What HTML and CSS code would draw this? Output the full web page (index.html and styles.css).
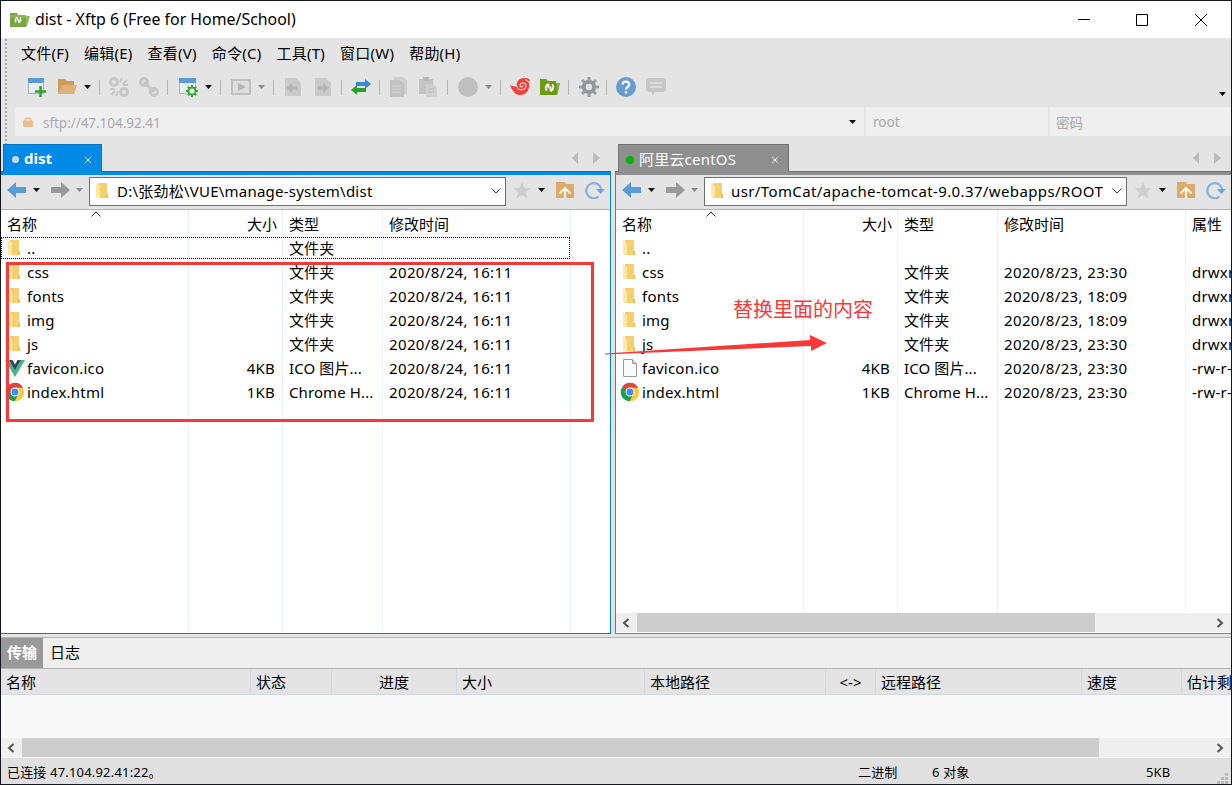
FILE: index.html
```html
<!DOCTYPE html>
<html lang="zh-CN">
<head>
    <meta charset="UTF-8">
    <meta name="viewport" content="width=device-width, initial-scale=1.0">
    <title>dist - Xftp 6</title>
    <link rel="stylesheet" href="styles.css">
</head>
<body>
    <svg class="defs">
        <symbol id="folder" viewBox="0 0 14 18"><path d="M3 1h9v11h1v4H4z" fill="#f6d070"/><path d="M11 12h2v4h-2z" fill="#efc052"/><path d="M1 1l4 3v13l-4-2z" fill="#ffe9a2"/></symbol>
        <symbol id="caret" viewBox="0 0 7 4"><path d="M0 0h7L3.5 4z"/></symbol>
        <symbol id="back" viewBox="0 0 20 16"><path d="M0 8l9-8v5h10v6H9v5z"/></symbol>
        <symbol id="star" viewBox="0 0 18 17"><path d="M9 0l2.3 6 6.2.3-4.7 3.9L14.500 16.500 9 13l-5.500 3.500 1.700-6.300L.500 6.300 6.700 6z" fill="#cdcdcd"/></symbol>
        <symbol id="up" viewBox="0 0 18 16"><path d="M0 0h9l1 2h8v14H0z" fill="#dcaa6a"/><path d="M3.500 11.500L9 6l5.500 5.500M9 7v9" fill="none" stroke="#fff3e2" stroke-width="2.200"/></symbol>
        <symbol id="reload" viewBox="0 0 20 18"><path d="M13.500 15.700A7.600 7.600 0 1 1 16.300 8" fill="none" stroke="#7fb4e2" stroke-width="2.200"/><path d="M11 8h9l-4.500 5z" fill="#6ba6db"/></symbol>
        <symbol id="chrome" viewBox="0 0 20 20"><circle cx="10" cy="10" r="9.200" fill="#fdc83a"/><path d="M10 10L2 5.400A9.200 9.200 0 0 1 18.200 5.800H10z" fill="#d94a40"/><path d="M2 5.400A9.200 9.200 0 0 0 9.500 19.200L13.500 12 10 10z" fill="#199c57"/><circle cx="10" cy="10" r="4.500" fill="#fff"/><circle cx="10" cy="10" r="3.500" fill="#4a88f0"/></symbol>
        <symbol id="page" viewBox="0 0 16 18"><path d="M1.500.500h9l4 4v13h-13z" fill="#fafafa" stroke="#999"/><path d="M10.500.500v4h4" fill="#ddd" stroke="#999"/></symbol>
        <symbol id="vue" viewBox="0 0 20 17"><path d="M0 0h4l6 10.500L16 0h4L10 17z" fill="#41b883"/><path d="M4 0h3.500L10 4.500 12.500 0H16l-6 10.500z" fill="#35495e"/></symbol>
        <symbol id="chev" viewBox="0 0 10 6"><path d="M.500.500L5 5 9.500.500" fill="none" stroke="#333"/></symbol>
        <symbol id="cross" viewBox="0 0 8 8"><path d="M1 1l6 6M7 1L1 7" stroke="#fff" stroke-width="1"/></symbol>
        <symbol id="swirl" viewBox="0 0 10 10"><path d="M4 1.500Q0 4 2.500 8M4 1.500V6M6 8.500Q10 6 7.500 2M6 8.500V4" fill="none" stroke="#fff" stroke-width="1.600"/></symbol>
        <symbol id="scroll" viewBox="0 0 8 10"><path d="M6.500 1L2 5l4.500 4" fill="none" stroke="#555" stroke-width="2"/></symbol>
    </svg>

    <div class="window">
        <div class="titlebar">
            <svg class="logo" width="20" height="14" viewBox="0 0 20 14"><path d="M14 3h6l-3 10h-3z" fill="#94ba5a"/><path d="M0 0h7l1 2h8v12H0z" fill="#79a541"/><path d="M0 2h16v3H0z" fill="#8fb55c"/><use href="#swirl" x="4" y="3" width="8" height="8"/></svg>
            <span class="title">dist - Xftp 6 (Free for Home/School)</span>
            <svg class="winbtns" width="132" height="14" viewBox="0 0 132 14"><path d="M1 6.500h12M59.500 1.500h11v11h-11zM118 1l12 12M130 1l-12 12" fill="none" stroke="#000"/></svg>
        </div>

        <div class="bars">
            <div class="menubar">
                <span>文件(F)</span><span>编辑(E)</span><span>查看(V)</span><span>命令(C)</span><span>工具(T)</span><span>窗口(W)</span><span>帮助(H)</span>
            </div>
            <div class="toolbar">
                <svg width="20" height="20"><path d="M2 1h16v16H2z" fill="#a5b4c2"/><path d="M3 6h14v10H3z" fill="#e9eef2"/><path d="M2 1h16v5H2z" fill="#5b9bd5"/><path d="M14.500 9v11M9 14.500h11" stroke="#2ba52b" stroke-width="2.400"/></svg>
                <svg width="20" height="20"><path d="M1 2h7l2 2h7v13H1z" fill="#cf9c5e"/><path d="M5 8h15l-3 9H1z" fill="#dfb077"/></svg>
                <svg class="caret" width="7" height="4"><use href="#caret"/></svg>
                <i class="sep"></i>
                <svg width="20" height="20" fill="none" stroke="#c6c6c6" stroke-width="3"><circle cx="5" cy="5" r="3.500"/><circle cx="15" cy="15" r="3.500"/><path d="M13 1l-2 4M18 3l-4 4M19 8h-5M1 12h5M2 18l4-4M7 19l2-5" stroke-width="2"/></svg>
                <svg width="20" height="20" fill="none" stroke="#c6c6c6" stroke-width="3"><circle cx="5" cy="5" r="3.500"/><circle cx="15" cy="15" r="3.500"/><path d="M5 5l10 10"/></svg>
                <i class="sep"></i>
                <svg width="20" height="20"><path d="M1 1h17v16H1z" fill="#a5b4c2"/><path d="M2 6h15v10H2z" fill="#e9eef2"/><path d="M1 1h17v5H1z" fill="#5b9bd5"/><circle cx="14" cy="14" r="6" fill="#e5f2e5"/><circle cx="14" cy="14" r="3.600" fill="none" stroke="#35a535" stroke-width="2"/><path d="M14 8v2M14 18v2M8 14h2M18 14h2M9.800 9.800l1.500 1.500M16.700 16.700l1.500 1.500M18.200 9.800l-1.500 1.500M11.300 16.700l-1.500 1.500" stroke="#35a535" stroke-width="2"/></svg>
                <svg class="caret" width="7" height="4"><use href="#caret"/></svg>
                <i class="sep"></i>
                <svg width="20" height="20"><rect x="1" y="3" width="18" height="14" fill="#dedede" stroke="#c0c0c0" stroke-width="2"/><path d="M7 6l8 4-8 4z" fill="#b4b4b4"/></svg>
                <svg class="caret dim" width="7" height="4"><use href="#caret"/></svg>
                <i class="sep"></i>
                <svg width="20" height="20"><path d="M2 1h11l5 5v13H2z" fill="#cacaca"/><path d="M3 11l6-5v3h5v4H9v3z" fill="#b5b5b5"/></svg>
                <svg width="20" height="20"><path d="M2 1h11l5 5v13H2z" fill="#cacaca"/><path d="M16 11l-6-5v3H5v4h5v3z" fill="#b5b5b5"/></svg>
                <i class="sep"></i>
                <svg width="20" height="20"><path d="M20 7l-6-5v3H5v4h9v3z" fill="#3b87d3"/><path d="M0 13l6-5v3h9v4H6v3z" fill="#2aa12a"/></svg>
                <i class="sep"></i>
                <svg width="20" height="20"><path d="M6 0h9l4 4v13H6z" fill="#cdcdcd"/><path d="M2 3h10l4 4v13H2z" fill="#c2c2c2"/><path d="M4 9h9M4 12h9M4 15h9" stroke="#d6d6d6"/></svg>
                <svg width="20" height="20"><path d="M1 2h14v15H1z" fill="#c4c4c4"/><path d="M5 0h6v4H5z" fill="#b9b9b9"/><path d="M8 7h7l4 3v10H8z" fill="#d0d0d0"/><path d="M10 12h6M10 15h6" stroke="#bbb"/></svg>
                <i class="sep"></i>
                <svg width="20" height="20"><circle cx="10" cy="10" r="10" fill="#bfbfbf"/></svg>
                <svg class="caret mid" width="7" height="4"><use href="#caret"/></svg>
                <i class="sep"></i>
                <svg width="20" height="20"><path d="M0 8c2 1 5 2 7 1C6 4 10 1 14 1c2 0 4 0 6 2l-1 2c1 7-2 13-9 13-5 0-8-5-10-10z" fill="#f0413a"/><path d="M7 9c0 5 8 5 9 0 0-4-6-4-6-.500 0 2 3 2 3 0M15 2.500c2 .5 3 1.500 4 3" fill="none" stroke="#f5dcdb" stroke-width="1.100"/></svg>
                <svg width="20" height="20"><path d="M0 2h6l2 2h8v2h4l-3 12H0z" fill="#6b9c12"/><path d="M17 6h3l-3 12z" fill="#86ad44"/><use href="#swirl" x="4" y="5" width="11" height="11"/></svg>
                <i class="sep"></i>
                <svg width="20" height="20"><circle cx="10" cy="10" r="5.200" fill="none" stroke="#949799" stroke-width="4"/><path d="M10 0v4M10 16v4M0 10h4M16 10h4M3 3l3 3M14 14l3 3M17 3l-3 3M6 14l-3 3" stroke="#999c9f" stroke-width="3"/></svg>
                <i class="sep"></i>
                <svg width="20" height="20"><circle cx="10" cy="10" r="10" fill="#6a9bcf"/><path d="M6.500 7.500C7 3 14 4 13.200 8c-.500 2-3.200 2-3.200 4.500M10 14.200v2.200" fill="none" stroke="#fff" stroke-width="2.200"/></svg>
                <svg width="20" height="20"><path d="M2 1h16l2 2v10l-2 2H9l-3 4v-4H2l-2-2V3z" fill="#c6c6c6"/><path d="M4 6h12M4 10h12" stroke="#dcdcdc" stroke-width="2"/></svg>
                <svg class="caret more" width="7" height="4"><use href="#caret"/></svg>
            </div>
            <div class="address">
                <div class="url"><svg width="10" height="10"><path d="M2.500 5V3a2.500 2 0 0 1 5 0v2" fill="none" stroke="#e6bd88" stroke-width="1.600"/><rect y="3.500" width="10" height="6.500" rx="1" fill="#e8c08c"/></svg><span>sftp://47.104.92.41</span><svg class="caret" width="7" height="4"><use href="#caret"/></svg></div>
                <div class="user">root</div>
                <div class="pwd">密码</div>
            </div>
        </div>

        <div class="panes">
            <div class="pane local">
                <div class="tabs">
                    <div class="tab"><i></i><b>dist</b><svg width="8" height="8"><use href="#cross"/></svg></div>
                    <svg class="scrolls" width="28" height="12"><path d="M6 0v12L0 6zM21 0v12l7-6z" fill="#bcbcbc"/></svg>
                </div>
                <div class="view">
                    <div class="nav">
                        <svg width="20" height="16" fill="#5b9bd5"><use href="#back"/></svg>
                        <svg class="caret" width="7" height="4"><use href="#caret"/></svg>
                        <svg class="fwd" width="20" height="16" fill="#999"><use href="#back"/></svg>
                        <svg class="caret mid" width="7" height="4"><use href="#caret"/></svg>
                        <div class="path"><svg width="14" height="18"><use href="#folder"/></svg><span>D:\张劲松\VUE\manage-system\dist</span><svg class="drop" width="10" height="6"><use href="#chev"/></svg></div>
                        <svg width="18" height="17"><use href="#star"/></svg>
                        <svg class="caret fav" width="7" height="4"><use href="#caret"/></svg>
                        <svg width="18" height="16"><use href="#up"/></svg>
                        <svg class="reload" width="20" height="18"><use href="#reload"/></svg>
                    </div>
                    <div class="list">
                        <svg class="sort" width="10" height="6"><use href="#chev"/></svg>
                        <div class="row head"><span>名称</span><span>大小</span><span>类型</span><span>修改时间</span></div>
                        <div class="row focus"><span><svg width="14" height="18"><use href="#folder"/></svg>..</span><span></span><span>文件夹</span></div>
                        <div class="row"><span><svg width="14" height="18"><use href="#folder"/></svg>css</span><span></span><span>文件夹</span><span>2020/8/24, 16:11</span></div>
                        <div class="row"><span><svg width="14" height="18"><use href="#folder"/></svg>fonts</span><span></span><span>文件夹</span><span>2020/8/24, 16:11</span></div>
                        <div class="row"><span><svg width="14" height="18"><use href="#folder"/></svg>img</span><span></span><span>文件夹</span><span>2020/8/24, 16:11</span></div>
                        <div class="row"><span><svg width="14" height="18"><use href="#folder"/></svg>js</span><span></span><span>文件夹</span><span>2020/8/24, 16:11</span></div>
                        <div class="row"><span><svg class="big" width="20" height="17"><use href="#vue"/></svg>favicon.ico</span><span>4KB</span><span>ICO 图片...</span><span>2020/8/24, 16:11</span></div>
                        <div class="row"><span><svg class="big" width="20" height="20"><use href="#chrome"/></svg>index.html</span><span>1KB</span><span>Chrome H...</span><span>2020/8/24, 16:11</span></div>
                    </div>
                </div>
            </div>

            <div class="pane remote">
                <div class="tabs">
                    <div class="tab"><i></i><span>阿里云centOS</span><svg width="8" height="8"><use href="#cross"/></svg></div>
                    <svg class="scrolls" width="28" height="12"><path d="M6 0v12L0 6zM21 0v12l7-6z" fill="#bcbcbc"/></svg>
                </div>
                <div class="view">
                    <div class="nav">
                        <svg width="20" height="16" fill="#5b9bd5"><use href="#back"/></svg>
                        <svg class="caret" width="7" height="4"><use href="#caret"/></svg>
                        <svg class="fwd" width="20" height="16" fill="#999"><use href="#back"/></svg>
                        <svg class="caret mid" width="7" height="4"><use href="#caret"/></svg>
                        <div class="path"><svg width="14" height="18"><use href="#folder"/></svg><span>usr/TomCat/apache-tomcat-9.0.37/webapps/ROOT</span><svg class="drop" width="10" height="6"><use href="#chev"/></svg></div>
                        <svg width="18" height="17"><use href="#star"/></svg>
                        <svg class="caret fav" width="7" height="4"><use href="#caret"/></svg>
                        <svg width="18" height="16"><use href="#up"/></svg>
                        <svg class="reload" width="20" height="18"><use href="#reload"/></svg>
                    </div>
                    <div class="list">
                        <svg class="sort" width="10" height="6"><use href="#chev"/></svg>
                        <div class="row head"><span>名称</span><span>大小</span><span>类型</span><span>修改时间</span><span>属性</span></div>
                        <div class="row"><span><svg width="14" height="18"><use href="#folder"/></svg>..</span></div>
                        <div class="row"><span><svg width="14" height="18"><use href="#folder"/></svg>css</span><span></span><span>文件夹</span><span>2020/8/23, 23:30</span><span>drwxr</span></div>
                        <div class="row"><span><svg width="14" height="18"><use href="#folder"/></svg>fonts</span><span></span><span>文件夹</span><span>2020/8/23, 18:09</span><span>drwxr</span></div>
                        <div class="row"><span><svg width="14" height="18"><use href="#folder"/></svg>img</span><span></span><span>文件夹</span><span>2020/8/23, 18:09</span><span>drwxr</span></div>
                        <div class="row"><span><svg width="14" height="18"><use href="#folder"/></svg>js</span><span></span><span>文件夹</span><span>2020/8/23, 23:30</span><span>drwxr</span></div>
                        <div class="row"><span><svg width="16" height="18"><use href="#page"/></svg>favicon.ico</span><span>4KB</span><span>ICO 图片...</span><span>2020/8/23, 23:30</span><span>-rw-r-</span></div>
                        <div class="row"><span><svg class="big" width="20" height="20"><use href="#chrome"/></svg>index.html</span><span>1KB</span><span>Chrome H...</span><span>2020/8/23, 23:30</span><span>-rw-r-</span></div>
                    </div>
                    <div class="hscroll"><svg width="8" height="10"><use href="#scroll"/></svg><i></i><svg class="right" width="8" height="10"><use href="#scroll"/></svg></div>
                </div>
            </div>
        </div>

        <div class="transfer">
            <div class="ttabs"><b>传输</b><span>日志</span></div>
            <div class="thead"><span>名称</span><span>状态</span><span class="mid">进度</span><span>大小</span><span>本地路径</span><span class="mid">&lt;-&gt;</span><span>远程路径</span><span>速度</span><span>估计剩</span></div>
            <div class="tbody"></div>
            <div class="hscroll"><svg width="8" height="10"><use href="#scroll"/></svg><i></i><svg class="right" width="8" height="10"><use href="#scroll"/></svg></div>
        </div>
        <div class="status">
            <span>已连接 47.104.92.41:22。</span><span>二进制</span><span>6 对象</span><span>5KB</span>
            <svg width="11" height="11" fill="#b9b9b9"><path d="M8 0h3v3H8zM4 4h3v3H4zM8 4h3v3H8zM0 8h3v3H0zM4 8h3v3H4zM8 8h3v3H8z"/></svg>
        </div>
    </div>

    <div class="mark-box"></div>
    <div class="mark-text">替换里面的内容</div>
    <svg class="mark-arrow" width="222" height="20"><path d="M0 18.500L205 5V0l17 8-16 8v-5L0 19.500z" fill="#fb3838"/></svg>
</body>
</html>
```
FILE: styles.css
```css
*{padding: 0;margin: 0;box-sizing: border-box;}
body{width: 1232px;height: 785px;overflow: hidden;position: relative;background: #15171e;font: 15px/24px "Noto Sans","Noto Sans CJK SC",sans-serif;color: #000;}
svg{flex: none;display: block;}
.defs{position: absolute;width: 0;height: 0;}
.window{display: flex;flex-direction: column;width: 1232px;height: 785px;padding: 1px;background: #15171e;}
.window > div{flex-shrink: 0;}
.caret{fill: #111;}
.caret.dim,.caret.mid{fill: #8b8b8b;}

/* title bar */
.titlebar{display: flex;align-items: center;height: 37px;padding: 0 22px 0 9px;background: #fff;}
.title{margin: 0 0 2px 5px;font-size: 15.900px;white-space: nowrap;}
.winbtns{margin-left: auto;}

/* menu + toolbar + address */
.bars{height: 106px;background: #e4e4e4 radial-gradient(circle,#a5a5a5 1px,transparent 1.2px) 3px 0/4px 4px repeat-y;}
.menubar{display: flex;height: 32px;padding-left: 20px;line-height: 31px;}
.menubar span{margin-right: 15px;white-space: nowrap;letter-spacing: .24px;}
.toolbar{display: grid;align-items: center;height: 34px;padding-left: 25px;
grid-template-columns: 31px 27px 15px 10px 30px 28px 11px 27px 15px 11px 27px 15px 10px 30px 28px 10px 28px 9px 30px 29px 11px 27px 15px 10px 30px 28px 11px 27px 10px 30px 30px 1fr;}
.sep{width: 1px;height: 15px;background: #b5b5b5;}
.toolbar .more{justify-self: end;align-self: end;margin: 0 5px 8px 0;}
.address{display: flex;gap: 2px;height: 29px;margin: 3px 0 0 14px;color: #aaa;font-size: 13.600px;line-height: 30px;}
.address div{background: #efefef;}
.url{display: flex;align-items: center;width: 849px;padding: 0 8px;}
.url span{margin: 2px 0 0 10px;letter-spacing: -.08px;}
.url .caret{margin-left: auto;}
.user{width: 182px;padding-left: 7px;}
.pwd{flex: 1;padding-left: 6px;line-height: 31px;}

/* panes */
.panes{display: flex;height: 493px;padding-bottom: 3px;background: #e4e4e4;}
.pane{display: flex;flex-direction: column;}
.local{width: 610px;margin-right: 4px;}
.remote{flex: 1;min-width: 0;}
.tabs{display: flex;align-items: flex-start;justify-content: space-between;height: 27px;padding-left: 2px;}
.remote .tabs{padding-left: 3px;}
.tab{display: flex;position: relative;z-index: 1;align-items: center;height: 28px;padding: 0 9px 0 8px;color: #fff;border: 1px solid #0176c3;border-bottom: 0;background: #018be6;}
.tab i{width: 7px;height: 7px;margin: 2px 5px 0 0;border-radius: 50%;background: #d5d5d5;}
.tab svg{margin: 3px 0 0 auto;}
.tab b{margin-bottom: 2px;}
.local .tab{width: 99px;}
.remote .tab{width: 171px;border-color: #737373;background: #8f8f8f;}
.remote .tab span{letter-spacing: .2px;}
.remote .tab i{width: 8px;height: 8px;background: #04b304;margin: 2px 5px 0 -1px;}
.scrolls{margin: 8px 11px 0 0;}
.remote .scrolls{margin-right: 10px;}
.view{display: flex;flex: 1;flex-direction: column;min-width: 0;border-top: 1px solid #0176c3;}
.local .view{border-right: 1px solid #0280cf;border-bottom: 1px solid #0280cf;}
.remote .view{border-top-color: #737373;border-left: 1px solid #777;border-bottom: 1px solid #888;}
.nav{display: flex;flex: none;align-items: center;height: 38px;padding: 0 5px 4px 6px;background: #e4e4e4;border-top: 3px solid #018be6;border-bottom: 1px solid #b3b3b3;}
.remote .nav{border-top-color: #8f8f8f;}
.nav > .caret{margin: 0 10px 0 6px;}
.nav .fwd{transform: scaleX(-1);}
.nav .fwd + .caret{margin: 0 6px 0 6px;}
.nav .caret.fav{margin: 0 11px 0 7px;}
.path{display: flex;flex: 1;align-items: center;height: 29px;margin: 2px 7px 0 0;padding: 0 4px 0 5px;background: #fff;border: 1px solid #707070;white-space: nowrap;min-width: 0;}
.path span{margin: 0 0 1px 8px;letter-spacing: .23px;}
.remote .path span{margin-left: 7px;letter-spacing: .38px;}
.path .drop{margin-left: auto;}
.nav .reload{margin-left: 11px;}
.list{position: relative;flex: 1;overflow: hidden;background: #fff;
background-image: linear-gradient(#e9f2fc,#e9f2fc),linear-gradient(#e9f2fc,#e9f2fc),linear-gradient(#e9f2fc,#e9f2fc),linear-gradient(#e9f2fc,#e9f2fc);
background-position: 187px 0,281px 0,381px 0,569px 0;background-size: 1px 100%;background-repeat: no-repeat;}
.sort{position: absolute;left: 90px;top: 1px;transform: scaleY(-1);}
.row{display: grid;grid-template-columns: 188px 94px 100px 188px 1fr;height: 24px;line-height: 24px;white-space: nowrap;letter-spacing: .22px;}
.row.head{height: 26px;padding-bottom: 0;line-height: 26px;letter-spacing: 0;}
.row.head span{padding-top: 1px;}
.row span{display: flex;align-items: center;padding-left: 6px;overflow: hidden;}
.row span:nth-child(2){justify-content: flex-end;padding: 0 8px 0 0;}
.row.head span:nth-child(2){padding: 1px 6px 0 0;}
.row span:nth-child(3){letter-spacing: .1px;}
.row span:nth-child(4){letter-spacing: .37px;}
.row.head span:nth-child(4){letter-spacing: 0;}
.row svg{margin-right: 6px;}
.row svg[width="16"]{margin-right: 4px;}
.row .big{margin: 0 2px 0 -2px;}
.focus{width: 569px;height: 22px;margin: 1px 0;line-height: 22px;outline: 1px dotted #000;outline-offset: -1px;}
.hscroll{display: flex;flex: none;align-items: center;height: 20px;background: #efefef;padding: 0 7px 0 6px;border-bottom: 1px solid #f8f8f8;}
.hscroll i{height: 19px;margin-left: 7px;background: #cdcdcd;}
.remote .hscroll i{width: 458px;}
.transfer .hscroll i{width: 1077px;}
.hscroll .right{margin-left: auto;transform: scaleX(-1);}

/* transfer list */
.transfer{border-top: 1px solid #b5b5b5;}
.ttabs{display: flex;height: 31px;line-height: 29px;background: #efefef;border-bottom: 1px solid #b5b5b5;}
.ttabs b{width: 42px;padding-left: 6px;color: #fff;background: #999;}
.ttabs span{padding-left: 7px;}
.thead{display: grid;grid-template-columns: 250px 81px 125px 188px 181px 50px 206px 100px 1fr;height: 26px;line-height: 27px;background: #e4e4e4;border-bottom: 1px solid #d2d9e5;}
.thead span{padding-left: 5px;border-right: 1px solid #d2d9e5;white-space: nowrap;overflow: hidden;}
.thead .mid{padding: 0;text-align: center;}
.thead span:last-child{border: 0;}
.tbody{height: 43px;background: #f8f8f8;border-bottom: 1px solid #fff;}
.status{display: grid;grid-template-columns: 851px 74px 214px 1fr 11px;height: 26px;padding: 0 3px 0 6px;background: #e0e0e0;font-size: 13px;line-height: 28px;letter-spacing: .18px;}
.status svg{align-self: end;margin-bottom: 2px;}

/* red annotation over the window */
.mark-box{position: absolute;left: 6px;top: 262px;width: 588px;height: 160px;border: 3px solid #fb3838;}
.mark-text{position: absolute;left: 733px;top: 298px;color: #fb3838;font-size: 20px;}
.mark-arrow{position: absolute;left: 605px;top: 335px;}
```
